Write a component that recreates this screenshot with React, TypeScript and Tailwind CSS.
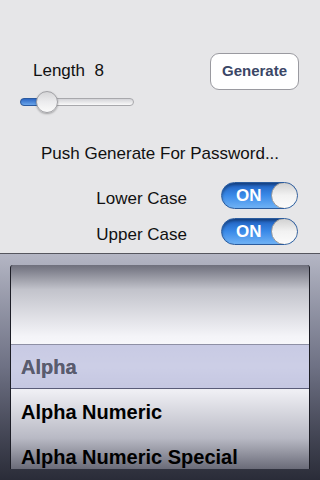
import { useState } from "react";

function Toggle({ on }: { on: boolean }) {
  return (
    <div className="relative w-[77px] h-[27px] rounded-full border border-[#2b5c9e] bg-gradient-to-b from-[#1f5fbf] via-[#3a8ae8] to-[#6fb2f5] shadow-[inset_0_2px_3px_rgba(0,0,0,0.35)] overflow-hidden">
      <span className="absolute left-[14px] top-0 h-full flex items-center text-white font-bold text-[17px] leading-none">
        {on ? "ON" : "OFF"}
      </span>
      <div className="absolute right-[-1px] top-[-1px] w-[27px] h-[27px] rounded-full border border-[#9a9a9a] bg-gradient-to-b from-[#d2d2d2] via-[#f2f2f2] to-[#fbfbfb]" />
    </div>
  );
}

export default function App() {
  const [length] = useState(8);
  const items = ["Alpha", "Alpha Numeric", "Alpha Numeric Special"];

  return (
    <div
      className="w-[320px] h-[480px] overflow-hidden bg-[#e6e6e8] text-[#111]"
      style={{ fontFamily: '"Liberation Sans", Arial, sans-serif' }}
    >
      <div className="h-[253px] pt-[53px]">
        <div className="flex justify-between pl-[20px] pr-[21px]">
          <div className="w-[114px]">
            <div className="pl-[13px] mt-[8px] h-[20px] leading-[20px] text-[17px]">
              Length&nbsp;&nbsp;{length}
            </div>
            <div className="relative mt-[10px] h-[22px]">
              <div className="absolute left-0 right-0 top-[7px] h-[8px] rounded-full border border-[#a8a8ac] bg-gradient-to-b from-[#d4d4d8] to-[#fafafa]" />
              <div className="absolute left-0 w-[24px] top-[7px] h-[8px] rounded-l-full border border-[#2a5aa0] bg-gradient-to-b from-[#2d67c4] to-[#6aa5ea]" />
              <div className="absolute left-[16px] top-0 w-[22px] h-[22px] rounded-full border border-[#a0a0a4] bg-gradient-to-b from-[#d6d6d8] via-[#ececee] to-[#fafafa] shadow-[0_1px_2px_rgba(0,0,0,0.3)]" />
            </div>
          </div>
          <button className="w-[89px] h-[37px] rounded-[9px] border border-[#9a9aa0] bg-white text-[#3b4766] font-bold text-[15px]">
            Generate
          </button>
        </div>

        <div className="mt-[31px] h-[20px] leading-[20px] text-[17px] text-center">
          Push Generate For Password...
        </div>

        <div className="mt-[18px] flex flex-col gap-[9px] pr-[22px]">
          <div className="flex items-center justify-end gap-[34px]">
            <span className="text-[17px] leading-[20px] mt-[7px]">Lower Case</span>
            <Toggle on />
          </div>
          <div className="flex items-center justify-end gap-[34px]">
            <span className="text-[17px] leading-[20px] mt-[7px]">Upper Case</span>
            <Toggle on />
          </div>
        </div>
      </div>

      <div className="h-[227px] border-t border-[#55565e] bg-gradient-to-b from-[#b4b6c4] via-[#6e7184] to-[#2a2c38] pt-[11px] px-[10px]">
        <div className="relative h-[204px] rounded-t-[3px] border-x border-[#1c1d26] bg-[linear-gradient(to_bottom,#6e6f7c_0%,#c2c3cb_12%,#f4f4f8_35%,#ffffff_50%,#eeeef3_62%,#b8b9c4_85%,#6a6b78_100%)] overflow-hidden">
          <div className="pt-[79px]">
            {items.map((item) => (
              <div key={item} className="h-[45px] flex items-center pl-[10px] text-[20px] font-bold text-black">
                {item}
              </div>
            ))}
          </div>
          <div className="absolute left-0 right-0 top-[79px] h-[45px] border-t border-[#8e90a4] border-b border-b-[#5a5c78] bg-[#a2a5d2]/55 flex items-center pl-[10px] text-[20px] font-bold text-[#5a5c6e]">
            Alpha
          </div>
        </div>
      </div>
    </div>
  );
}
